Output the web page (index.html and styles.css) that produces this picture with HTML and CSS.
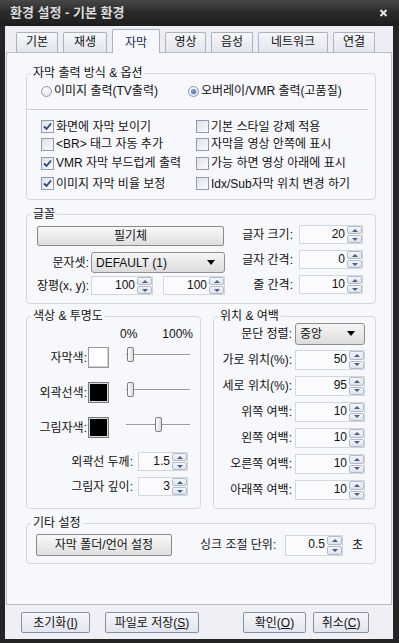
FILE: index.html
```html
<!DOCTYPE html>
<html lang="ko">
<head>
    <meta charset="UTF-8">
    <meta name="viewport" content="width=device-width, initial-scale=1.0">
    <title>환경 설정 - 기본 환경</title>
    <link rel="stylesheet" href="styles.css">
</head>
<body>
<div class="window">
    <div class="titlebar">
        <span class="title">환경 설정 - 기본 환경</span>
        <svg class="close" width="9" height="8" viewBox="0 0 9 8"><path d="M1.5 1 L7.5 7 M7.5 1 L1.5 7" stroke="#e6e6e6" stroke-width="2"/></svg>
    </div>
    <div class="client">
        <div class="tabs">
            <div class="tab t42">기본</div>
            <div class="tab t44">재생</div>
            <div class="tab t48 on">자막</div>
            <div class="tab t41">영상</div>
            <div class="tab t42">음성</div>
            <div class="tab t70">네트워크</div>
            <div class="tab t42">연결</div>
        </div>

        <div class="page">
            <fieldset class="group out">
                <legend>자막 출력 방식 &amp; 옵션</legend>
                <div class="radios">
                    <label class="opt"><span class="rb"></span>이미지 출력(TV출력)</label>
                    <label class="opt"><span class="rb on"></span>오버레이/VMR 출력(고품질)</label>
                </div>
                <div class="sep"></div>
                <div class="checks">
                    <label class="opt"><span class="cb"><svg width="11" height="11" viewBox="0 0 11 11"><path d="M2 5.5 L4.5 8 L9 2.5" stroke="#28467f" stroke-width="1.8" fill="none"/></svg></span>화면에 자막 보이기</label>
                    <label class="opt"><span class="cb"></span>기본 스타일 강제 적용</label>
                    <label class="opt"><span class="cb"></span>&lt;BR&gt; 태그 자동 추가</label>
                    <label class="opt"><span class="cb"></span>자막을 영상 안쪽에 표시</label>
                    <label class="opt"><span class="cb"><svg width="11" height="11" viewBox="0 0 11 11"><path d="M2 5.5 L4.5 8 L9 2.5" stroke="#28467f" stroke-width="1.8" fill="none"/></svg></span>VMR 자막 부드럽게 출력</label>
                    <label class="opt"><span class="cb"></span>가능 하면 영상 아래에 표시</label>
                    <label class="opt"><span class="cb"><svg width="11" height="11" viewBox="0 0 11 11"><path d="M2 5.5 L4.5 8 L9 2.5" stroke="#28467f" stroke-width="1.8" fill="none"/></svg></span>이미지 자막 비율 보정</label>
                    <label class="opt"><span class="cb"></span>Idx/Sub자막 위치 변경 하기</label>
                </div>
            </fieldset>

            <fieldset class="group font">
                <legend>글꼴</legend>
                <div class="font-body">
                    <div class="font-left">
                        <button class="btn fbtn">필기체</button>
                        <div class="row charset">
                            <span class="lbl">문자셋:</span>
                            <div class="select cs"><span>DEFAULT (1)</span></div>
                        </div>
                        <div class="row ratio">
                            <span class="lbl">장평(x, y):</span>
                            <div class="spin w62"><span class="val">100</span><span class="arrows"><i class="up"></i><i class="dn"></i></span></div>
                            <div class="spin w62 ml10"><span class="val">100</span><span class="arrows"><i class="up"></i><i class="dn"></i></span></div>
                        </div>
                    </div>
                    <div class="font-right">
                        <span class="rlbl">글자 크기:</span>
                        <div class="spin"><span class="val">20</span><span class="arrows"><i class="up"></i><i class="dn"></i></span></div>
                        <span class="rlbl">글자 간격:</span>
                        <div class="spin"><span class="val">0</span><span class="arrows"><i class="up"></i><i class="dn"></i></span></div>
                        <span class="rlbl">줄 간격:</span>
                        <div class="spin"><span class="val">10</span><span class="arrows"><i class="up"></i><i class="dn"></i></span></div>
                    </div>
                </div>
            </fieldset>

            <div class="pair">
                <fieldset class="group color">
                    <legend>색상 &amp; 투명도</legend>
                    <div class="pct"><span>0%</span><span>100%</span></div>
                    <div class="color-grid">
                        <span class="rlbl">자막색:</span>
                        <span class="sw"></span>
                        <div class="slider"><span class="thumb" style="left: 9px"></span></div>

                        <span class="rlbl">외곽선색:</span>
                        <span class="sw black"></span>
                        <div class="slider"><span class="thumb" style="left: 9px"></span></div>

                        <span class="rlbl">그림자색:</span>
                        <span class="sw black"></span>
                        <div class="slider"><span class="thumb" style="left: 37px"></span></div>
                    </div>
                    <div class="depth">
                        <span class="rlbl">외곽선 두께:</span>
                        <div class="spin"><span class="val">1.5</span><span class="arrows"><i class="up"></i><i class="dn"></i></span></div>
                        <span class="rlbl">그림자 깊이:</span>
                        <div class="spin"><span class="val">3</span><span class="arrows"><i class="up"></i><i class="dn"></i></span></div>
                    </div>
                </fieldset>

                <fieldset class="group pos">
                    <legend>위치 &amp; 여백</legend>
                    <div class="pos-grid">
                        <span class="rlbl">문단 정렬:</span>
                        <div class="select al"><span>중앙</span></div>
                        <span class="rlbl">가로 위치(%):</span>
                        <div class="spin"><span class="val">50</span><span class="arrows"><i class="up"></i><i class="dn"></i></span></div>
                        <span class="rlbl">세로 위치(%):</span>
                        <div class="spin"><span class="val">95</span><span class="arrows"><i class="up"></i><i class="dn"></i></span></div>
                        <span class="rlbl">위쪽 여백:</span>
                        <div class="spin"><span class="val">10</span><span class="arrows"><i class="up"></i><i class="dn"></i></span></div>
                        <span class="rlbl">왼쪽 여백:</span>
                        <div class="spin"><span class="val">10</span><span class="arrows"><i class="up"></i><i class="dn"></i></span></div>
                        <span class="rlbl">오른쪽 여백:</span>
                        <div class="spin"><span class="val">10</span><span class="arrows"><i class="up"></i><i class="dn"></i></span></div>
                        <span class="rlbl">아래쪽 여백:</span>
                        <div class="spin"><span class="val">10</span><span class="arrows"><i class="up"></i><i class="dn"></i></span></div>
                    </div>
                </fieldset>
            </div>

            <fieldset class="group etc">
                <legend>기타 설정</legend>
                <div class="etc-body">
                    <button class="btn folder">자막 폴더/언어 설정</button>
                    <span class="sync-lbl">싱크 조절 단위:</span>
                    <div class="spin w58"><span class="val">0.5</span><span class="arrows"><i class="up"></i><i class="dn"></i></span></div>
                    <span class="sec">초</span>
                </div>
            </fieldset>
        </div>

        <div class="buttonbar">
            <button class="btn bb b1">초기화(<u>I</u>)</button>
            <button class="btn bb b2">파일로 저장(<u>S</u>)</button>
            <button class="btn bb b3">확인(<u>O</u>)</button>
            <button class="btn bb b4">취소(<u>C</u>)</button>
        </div>
    </div>
</div>
</body>
</html>
```

FILE: styles.css
```css
* {
    box-sizing: border-box;
}
body {
    margin: 0;
    background: #1f1f1f;
    font: 12px/14px "Liberation Sans", "Noto Sans CJK KR", sans-serif;
    color: #111;
}
.window {
    width: 399px;
    height: 643px;
    display: flex;
    flex-direction: column;
    background: #242424;
}
.titlebar {
    height: 26px;
    display: flex;
    align-items: center;
    padding: 0 11px 0 10px;
    background: linear-gradient(#474747, #2c2c2c 45%, #1d1d1d);
}
.title {
    flex: 1;
    color: #dcdcdc;
    font-weight: bold;
    font-size: 13px;
}
.client {
    flex: 1;
    margin: 0 6px 4px 5px;
    background: #eceef4;
    display: flex;
    flex-direction: column;
}

/* 탭 */
.tabs {
    height: 26px;
    display: flex;
    align-items: flex-end;
    gap: 5px;
    padding-left: 11px;
}
.tab {
    height: 20px;
    border: 1px solid #aab2c2;
    border-bottom: none;
    border-radius: 2px 2px 0 0;
    background: linear-gradient(#f6f7fa, #e1e5ed);
    text-align: center;
    line-height: 19px;
}
.tab.on {
    height: 24px;
    margin-bottom: -1px;
    position: relative;
    z-index: 1;
    background: #f7f8fb;
    line-height: 26px;
    color: #1b2a4a;
}
.t41 { width: 41px; }
.t42 { width: 42px; }
.t44 { width: 44px; }
.t48 { width: 48px; }
.t70 { width: 70px; }

.page {
    height: 553px;
    margin: 0 1px;
    border: 1px solid #b6becc;
    background: #f7f8fb;
    padding: 13px 15px 0 19px;
}

/* 그룹 박스 */
.group {
    margin: 0;
    padding: 0;
    min-width: 0;
    border: 1px solid #d3d8e1;
    border-radius: 4px;
}
.group legend {
    padding: 0 2px;
    margin-left: 4px;
    line-height: 14px;
}
.out { height: 134px; }
.font { height: 97px; margin-top: 7px; }
.pair {
    display: flex;
    gap: 12px;
    margin-top: 5px;
}
.color { width: 175px; height: 200px; }
.pos { width: 163px; height: 200px; }
.etc { height: 48px; margin-top: 7px; }

.opt {
    display: flex;
    align-items: center;
    gap: 2px;
    white-space: nowrap;
}
.radios {
    display: grid;
    grid-template-columns: 147px auto;
    height: 16px;
    margin-top: 3px;
    padding-left: 14px;
}
.rb {
    width: 11px;
    height: 11px;
    border-radius: 50%;
    border: 1px solid #8d99ad;
    background: radial-gradient(circle at 40% 35%, #ffffff, #d6dbe4);
    display: flex;
    align-items: center;
    justify-content: center;
}
.rb.on::after {
    content: "";
    width: 5px;
    height: 5px;
    border-radius: 50%;
    background: radial-gradient(circle at 40% 35%, #7fb0ea, #1c4d98);
}
.sep {
    height: 1px;
    margin: 10px 7px 0 0;
    background: #c6ccd6;
    box-shadow: 0 1px #ffffff;
}
.checks {
    display: grid;
    grid-template-columns: 155px auto;
    grid-template-rows: 17px 18px 20px 21px;
    margin-top: 8px;
    padding-left: 14px;
}
.cb {
    width: 13px;
    height: 13px;
    border: 1px solid #8e9bb0;
    background: linear-gradient(135deg, #dde1e8, #fbfcfd);
    display: flex;
    align-items: center;
    justify-content: center;
}

/* 버튼, 콤보, 스핀 */
.btn {
    font: inherit;
    color: #111;
    padding: 0;
    border: 1px solid #8a8a8a;
    border-radius: 2px;
    background: linear-gradient(#f9f9f9, #dedede);
}
.select {
    display: flex;
    align-items: center;
    justify-content: space-between;
    border: 1px solid #8f8f8f;
    border-radius: 3px;
    background: linear-gradient(#f6f6f6, #dcdcdc);
    padding: 0 9px 0 4px;
}
.select::after {
    content: "";
    border-left: 4px solid transparent;
    border-right: 4px solid transparent;
    border-top: 5px solid #000;
}
.spin {
    display: flex;
    height: 19px;
    border: 1px solid #d2d6de;
    background: #fbfbfd;
}
.spin .val {
    flex: 1;
    text-align: right;
    padding-right: 2px;
    line-height: 17px;
}
.spin .arrows {
    width: 15px;
    display: flex;
    flex-direction: column;
    gap: 1px;
}
.spin .arrows i {
    flex: 1;
    border: 1px solid #b1bacb;
    border-radius: 2px;
    background: linear-gradient(#f4f6fa, #dde3ee);
    display: flex;
    align-items: center;
    justify-content: center;
}
.spin .arrows .up::after {
    content: "";
    border-left: 3px solid transparent;
    border-right: 3px solid transparent;
    border-bottom: 3px solid #4b5e85;
}
.spin .arrows .dn::after {
    content: "";
    border-left: 3px solid transparent;
    border-right: 3px solid transparent;
    border-top: 3px solid #4b5e85;
}
.rlbl {
    text-align: right;
    white-space: nowrap;
}

/* 글꼴 */
.font-body {
    display: flex;
    padding-left: 2px;
}
.font-left {
    width: 196px;
}
.fbtn {
    display: block;
    width: 187px;
    height: 20px;
    margin: 5px 0 0 8px;
}
.row {
    display: flex;
    align-items: center;
}
.lbl {
    width: 62px;
    text-align: right;
    padding-right: 2px;
    white-space: nowrap;
}
.charset {
    height: 21px;
    margin-top: 6px;
}
.cs {
    width: 134px;
    height: 21px;
}
.ratio {
    margin-top: 3px;
}
.w62 { width: 62px; }
.w58 { width: 58px; }
.ml10 { margin-left: 10px; }
.font-right {
    margin-left: 5px;
    padding-top: 4px;
    display: grid;
    grid-template-columns: 63px 64px;
    grid-auto-rows: 19px;
    column-gap: 6px;
    row-gap: 6px;
    align-items: center;
}

/* 색상 & 투명도 */
.pct {
    display: flex;
    justify-content: space-between;
    width: 73px;
    margin: 4px 0 0 93px;
}
.color-grid {
    display: grid;
    grid-template-columns: 61px 30px 74px;
    grid-template-rows: repeat(3, 21px);
    row-gap: 14px;
    margin-top: 6px;
    align-items: center;
}
.color-grid .rlbl {
    padding-right: 1px;
}
.sw {
    width: 21px;
    height: 21px;
    border: 1px solid #999999;
    background: #ffffff;
    box-shadow: inset -1px -1px #cfcfcf;
}
.sw.black {
    background: #000000;
    border-color: #7a7a7a;
    box-shadow: inset 0 0 0 1px #d9d9d9;
}
.slider {
    position: relative;
    height: 21px;
}
.slider::before {
    content: "";
    position: absolute;
    left: 8px;
    right: 2px;
    top: 7px;
    height: 1px;
    background: #9b9b9b;
    box-shadow: 0 1px #ffffff;
}
.thumb {
    position: absolute;
    top: 0;
    width: 7px;
    height: 15px;
    border: 1px solid #7f7f7f;
    border-radius: 2px;
    background: linear-gradient(90deg, #fdfdfd, #d9d9d9);
}
.depth {
    display: grid;
    grid-template-columns: 108px 50px;
    grid-auto-rows: 19px;
    column-gap: 3px;
    row-gap: 6px;
    margin-top: 14px;
    align-items: center;
}
.depth .rlbl {
    padding-right: 2px;
}

/* 위치 & 여백 */
.pos-grid {
    display: grid;
    grid-template-columns: 78px 70px;
    grid-template-rows: 21px repeat(6, 20px);
    column-gap: 3px;
    row-gap: 6px;
    align-items: center;
}
.pos-grid .spin {
    height: 20px;
}
.al {
    height: 22px;
}

/* 기타 설정 */
.etc-body {
    display: flex;
    align-items: center;
    height: 22px;
    margin-top: 4px;
    padding-left: 9px;
}
.folder {
    width: 136px;
    height: 22px;
}
.sync-lbl {
    width: 85px;
    margin-left: 28px;
    white-space: nowrap;
}
.etc-body .spin {
    height: 21px;
}
.sec {
    margin-left: 9px;
}

/* 하단 버튼 */
.buttonbar {
    height: 34px;
    display: flex;
    padding: 7px 24px 0 16px;
    background: #eef0f5;
}
.bb {
    height: 21px;
    border-color: #8791a5;
    background: linear-gradient(#f6f7fb, #e2e5ee);
}
.b1 { width: 69px; }
.b2 { width: 94px; margin-left: 15px; }
.b3 { width: 63px; margin-left: auto; }
.b4 { width: 56px; margin-left: 7px; }
```
